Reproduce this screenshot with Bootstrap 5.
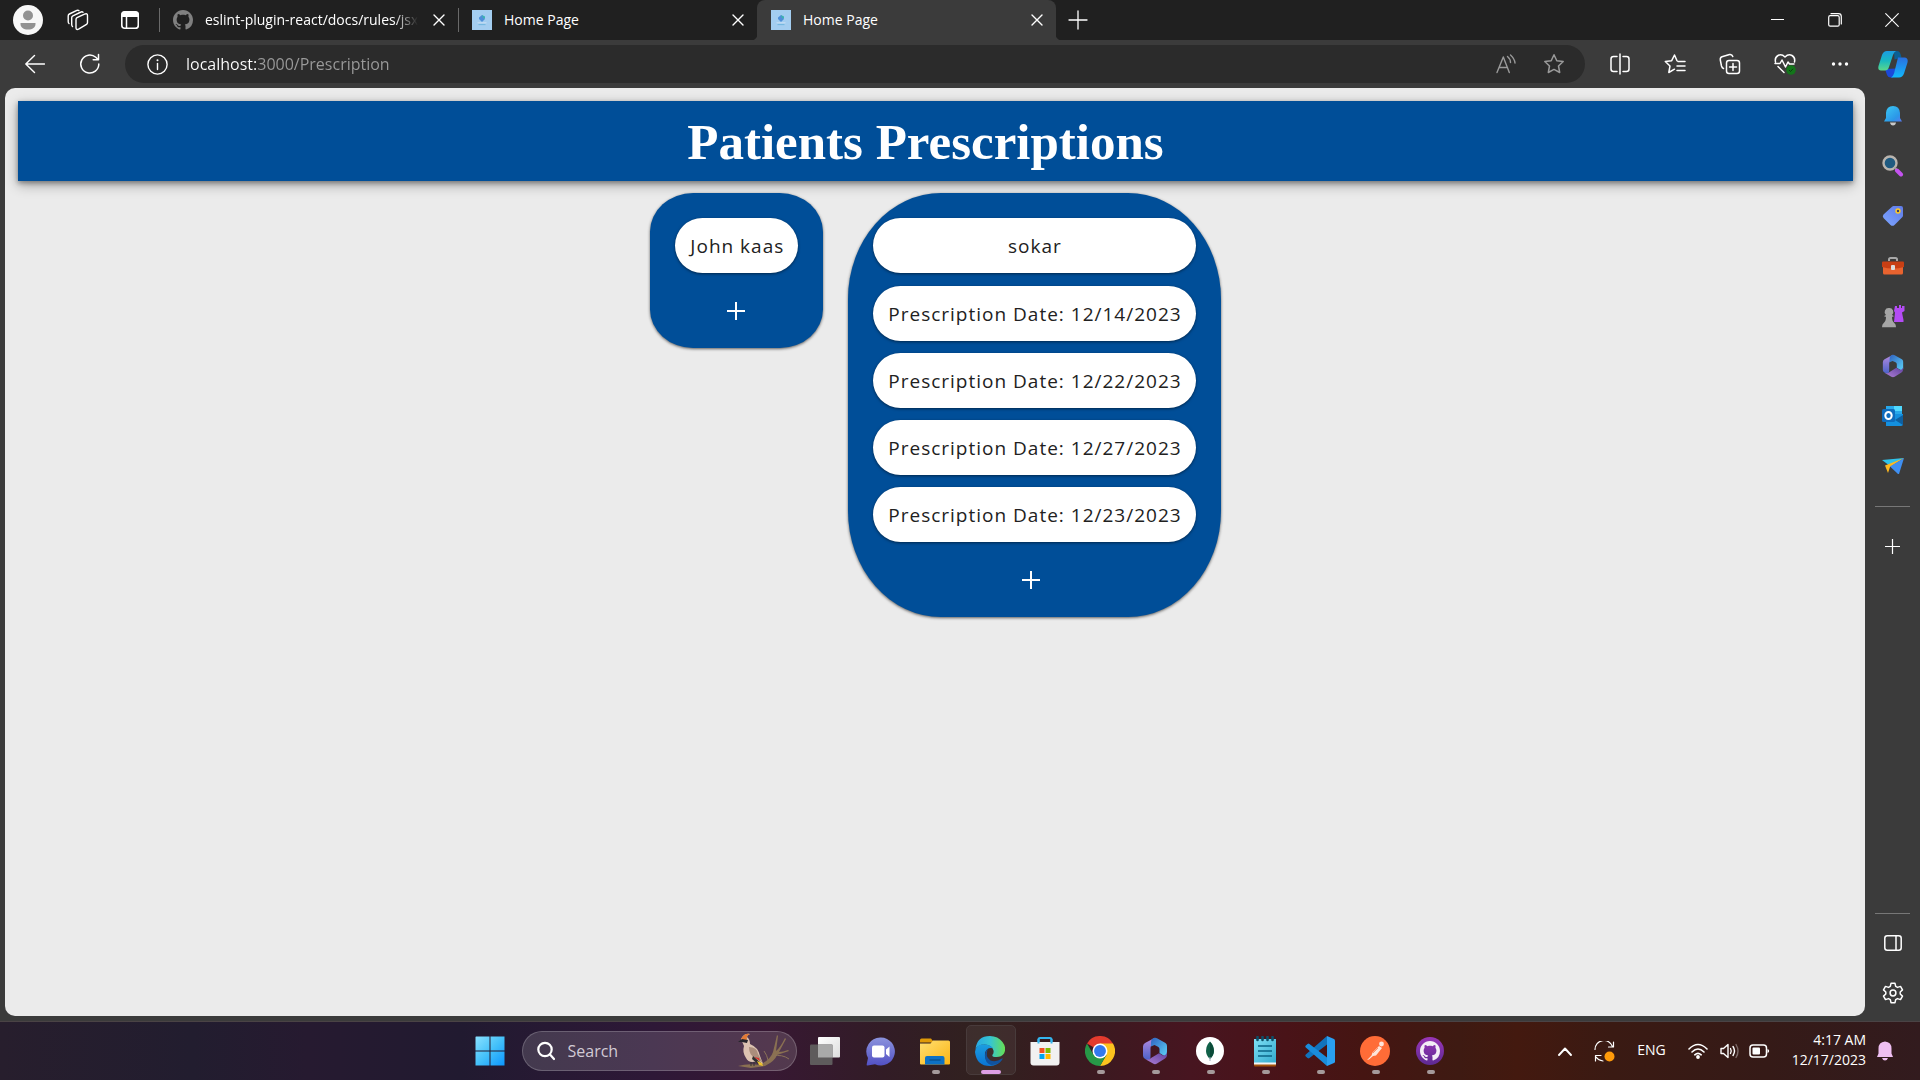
<!DOCTYPE html>
<html lang="en">
<head>
<meta charset="utf-8">
<meta name="viewport" content="width=device-width, initial-scale=1">
<title>Home Page</title>
<link href="https://cdn.jsdelivr.net/npm/bootstrap@5.3.0/dist/css/bootstrap.min.css" rel="stylesheet">
<style>
  :root { --ui: "Open Sans", "Noto Sans", sans-serif; --blue: #004e98; --chrome: #3b3b3b; }
  body { font-family: var(--ui); font-size: 14px; background: var(--chrome); color: #fff; }
  svg { display: block; flex: none; }
  .icon-btn { display: flex; align-items: center; justify-content: center; flex: none; padding: 0; border: 0; background: none; color: inherit; }
  .line { fill: none; stroke: currentColor; stroke-linecap: round; stroke-linejoin: round; }

  /* tab strip */
  .tab-strip { background: #202020; height: 40px; }
  .strip-tools { width: 159px; padding-left: 13px; gap: 24px; }
  .browser-tab { width: 299px; padding: 0 13px 0 14px; position: relative; }
  .browser-tab::before { content: ""; position: absolute; left: 0; top: 8px; width: 1px; height: 24px; background: #6a6a6a; }
  .browser-tab a { color: #fff; text-decoration: none; gap: 12px; min-width: 0; line-height: 20px; padding-bottom: 1px; }
  .tab-text { white-space: nowrap; overflow: hidden; }
  .fade-end { -webkit-mask-image: linear-gradient(90deg, #000 calc(100% - 24px), transparent); mask-image: linear-gradient(90deg, #000 calc(100% - 24px), transparent); }
  .browser-tab.current { background: var(--chrome); border-radius: 8px 8px 0 0; }
  .browser-tab.current::before, .browser-tab.current::after { background: radial-gradient(circle at 0 0, transparent 6px, var(--chrome) 7px); content: ""; position: absolute; top: auto; bottom: 0; width: 6px; height: 6px; }
  .browser-tab.current::before { left: -6px; }
  .browser-tab.current::after { right: -6px; background: radial-gradient(circle at 100% 0, transparent 6px, var(--chrome) 7px); }
  .window-ctl { width: 57px; height: 40px; }

  /* toolbar */
  .toolbar { height: 48px; padding-left: 25px; padding-right: 12px; }
  .address { height: 38px; background: #2b2b2b; border-radius: 19px; margin-left: 24px; padding: 0 20px 0 22px; gap: 18px; }
  .address input { font-size: 16px; border: 0; outline: 0; padding: 0; color: transparent; background: linear-gradient(90deg, #fff 71px, #9a9a9a 71px); -webkit-background-clip: text; background-clip: text; }
  .tool-row { gap: 33px; margin: 0 27px 0 24px; }

  /* page */
  .site { background: #ebebeb; border-radius: 10px; margin: 0 0 5px 5px; padding: 13px 12px 0 13px; color: #212121; overflow: hidden; }
  .site-header { background: var(--blue); height: 80px; padding-right: 20px; box-shadow: 0 4px 12px rgba(0,0,0,.3), 0 2px 5px rgba(0,0,0,.35); }
  .site-header h1 { font: 700 51px/60px "Liberation Serif", "Times New Roman", serif; color: #fff; margin: 0; padding-top: 2px; }
  .patients { gap: 25px; margin-top: 12px; }
  .patient { background: var(--blue); border-radius: 25%; padding: 25px 25px 11px; gap: 12px; box-shadow: 0 1px 3px rgba(0,0,0,.6); }
  .entry { background: #fff; height: 55px; padding: 2px 14px 0 15px; font-size: 19px; line-height: 53px; letter-spacing: 1px; text-align: center; white-space: nowrap; box-shadow: 0 1px 3px rgba(0,0,0,.5); }
  .patient .entry:first-child + .entry { margin-top: 1px; }
  .add { height: 52px; color: #fff; padding-right: 7px; }
  .patient:first-child .add { padding-right: 2px; }

  /* browser side bar */
  .side { width: 55px; padding: 3px 0; }
  .side .icon-btn { width: 55px; height: 50px; }
  .side hr { width: 35px; margin: 0; border-top: 1px solid #777; opacity: 1; }
  .side hr.upper { margin: 15px 0 14px; }

  /* taskbar */
  .taskbar { height: 59px; border-top: 1px solid #4a4345; background: linear-gradient(90deg, #271e2d 0, #221d2f 10%, #261a30 16%, #211a30 24%, #2e1837 34%, #371833 40%, #321c26 46%, #31211f 51%, #391a20 56%, #471520 62%, #491318 67%, #451512 71%, #3e1a12 76%, #43190f 79%, #3a1a13 84%, #351a17 92%, #321b1e 100%); }
  .wing { flex: 1 1 0; }
  .app { width: 55px; height: 58px; position: relative; }
  .app.running::after { content: ""; position: absolute; left: 24px; bottom: 6px; width: 8px; height: 4px; border-radius: 2px; background: #a59a9b; }
  .app.focused::before { content: ""; position: absolute; inset: 3px 2px 5px 3px; border: 1px solid #483b3b; border-radius: 5px; background: rgba(255,255,255,.06); }
  .app.focused::after { left: 18px; width: 20px; background: #dd9fe4; }
  .app svg { position: relative; }
  .search-box { width: 275px; height: 40px; border-radius: 20px; border: 1px solid rgba(255,255,255,.2); background: rgba(255,255,255,.14); margin: 0 1px 0 4px; padding: 0 5px 0 14px; gap: 13px; }
  .search-box input { border: 0; outline: 0; background: none; padding: 0; flex: 1; min-width: 0; font-size: 16px; color: #d8d0da; }
  .search-box input::placeholder { color: #d2cad5; }
  .clock { font-size: 14px; line-height: 20px; text-align: right; margin-left: 22px; padding-bottom: 2px; }
  .tray .wide { margin-right: 22px; }
  .tray .bell { margin: 0 25px 0 9px; }
</style>
<script src="https://cdn.jsdelivr.net/npm/bootstrap@5.3.0/dist/js/bootstrap.bundle.min.js"></script>
</head>
<body class="d-flex flex-column vh-100 overflow-hidden">

<svg width="0" height="0" class="position-absolute" aria-hidden="true">
  <defs>
    <symbol id="cross" viewBox="0 0 12 12"><path class="line" stroke-width="1.4" d="M1 1l10 10M11 1L1 11"/></symbol>
    <symbol id="octo" viewBox="0 0 16 16"><path fill="currentColor" d="M8 0C3.58 0 0 3.58 0 8c0 3.54 2.29 6.53 5.47 7.59.4.07.55-.17.55-.38 0-.19-.01-.82-.01-1.49-2.01.37-2.53-.49-2.69-.94-.09-.23-.48-.94-.82-1.13-.28-.15-.68-.52-.01-.53.63-.01 1.08.58 1.23.82.72 1.21 1.87.87 2.33.66.07-.52.28-.87.51-1.07-1.78-.2-3.64-.89-3.64-3.95 0-.87.31-1.59.82-2.15-.08-.2-.36-1.02.08-2.12 0 0 .67-.21 2.2.82.64-.18 1.32-.27 2-.27s1.36.09 2 .27c1.53-1.04 2.2-.82 2.2-.82.44 1.1.16 1.92.08 2.12.51.56.82 1.27.82 2.15 0 3.07-1.87 3.75-3.65 3.95.29.25.54.73.54 1.48 0 1.07-.01 1.93-.01 2.2 0 .21.15.46.55.38A8.01 8.01 0 0 0 16 8c0-4.42-3.58-8-8-8z"/></symbol>
    <symbol id="favicon" viewBox="0 0 20 20"><rect width="20" height="20" fill="#a3cdf0"/><path d="M7 7.500l3-2.500 3 2.500-.5 2L10 12 7 9z" fill="#4f8fd8"/><path d="M10 5l3 1.500v2l-2-.5z" fill="#3bb3ae"/><path d="M5.500 12.800h9" stroke="#c9dff2" stroke-width="1"/><path d="M6.500 14.600h7" stroke="#6bb2dc" stroke-width=".9"/></symbol>
    <symbol id="plus" viewBox="0 0 18 18"><path d="M9 0v18M0 9h18" stroke="currentColor" stroke-width="2"/></symbol>
    <linearGradient id="ma" x1="0" y1="0" x2="0" y2="1"><stop offset="0" stop-color="#b58be0"/><stop offset="1" stop-color="#4a62c8"/></linearGradient>
    <linearGradient id="mb" x1="0" y1="0" x2="1" y2="1"><stop offset="0" stop-color="#2f62c0"/><stop offset="1" stop-color="#5cd2f8"/></linearGradient>
    <linearGradient id="mc" x1="0" y1="1" x2="1" y2="0"><stop offset="0" stop-color="#b07fd6"/><stop offset="1" stop-color="#5b3f9c"/></linearGradient>
    <symbol id="m365" viewBox="0 0 26 28">
      <path d="M13 .7L3 6Q1 7.200 1 9.500v9q0 2 1.500 3l3 1.500q3 .5 3-3V11q0-2 1.500-3L17 4z" fill="url(#ma)"/>
      <path d="M11 1.300q2-1 4 0L23.500 6Q25 7 25 9v8.500q-1 2.500-3.500 1L17.500 16V12q0-1.500-1.500-2.300L12.500 8 9 9.500V5q0-2.500 2-3.700z" fill="url(#mb)"/>
      <path d="M25 14.500V18q0 2.500-2 3.600L15 26.600q-2 1.100-4 0L3 22q4 1.500 6-1l8-4.800 4 2.300q3.500 0 4-4z" fill="url(#mc)"/>
    </symbol>
  </defs>
</svg>

<header>
  <nav class="tab-strip d-flex" aria-label="Tabs">
    <div class="strip-tools d-flex align-items-center">
      <button class="icon-btn" aria-label="Profile"><svg width="30" height="30" viewBox="0 0 30 30"><circle cx="15" cy="15" r="15" fill="#f8f8f8"/><circle cx="15" cy="10.500" r="5" fill="#929292"/><path d="M7.500 18h15v1c0 3.500-3 5.500-7.500 5.500S7.500 22.500 7.500 19z" fill="#929292"/></svg></button>
      <button class="icon-btn" aria-label="Workspaces"><svg width="22" height="22" viewBox="0 0 22 22" class="line" stroke-width="1.400"><path d="M9 10.500q0-1.200 1-1.800l7.500-3.600q3-1.200 3 1.400v7q0 1.200-1 1.800l-7.500 4.600q-3 1.600-3-1.200zM5.500 17.500q-.8-.6-.8-2V8.800q0-1.400 1.200-2L14 3q1.200-.6 2 .2M2 14.500q-.8-.6-.8-2V7q0-1.400 1.200-2l7.500-3.600q1.200-.5 2 .2"/></svg></button>
      <button class="icon-btn ms-2" aria-label="Tab actions"><svg width="18" height="20" viewBox="1 0 18 20"><rect x="1.800" y="1.800" width="16.500" height="16.500" rx="3" class="line" stroke-width="1.600"/><path d="M1.500 7V4q0-2.500 2.500-2.500h12Q18.500 1.500 18.500 4v3z" fill="#fff"/><path d="M6.500 6v12" stroke="#fff" stroke-width="1.500"/></svg></button>
    </div>
    <div class="browser-tab d-flex align-items-center justify-content-between">
      <a href="#" class="d-flex align-items-center"><svg width="20" height="20" style="color:#808080"><use href="#octo"/></svg><span class="tab-text fade-end">eslint-plugin-react/docs/rules/jsx</span></a>
      <button class="icon-btn ms-1" aria-label="Close tab"><svg width="12" height="12"><use href="#cross"/></svg></button>
    </div>
    <div class="browser-tab d-flex align-items-center justify-content-between">
      <a href="#" class="d-flex align-items-center"><svg width="20" height="20"><use href="#favicon"/></svg><span class="tab-text">Home Page</span></a>
      <button class="icon-btn" aria-label="Close tab"><svg width="12" height="12"><use href="#cross"/></svg></button>
    </div>
    <div class="browser-tab current d-flex align-items-center justify-content-between">
      <a href="#" class="d-flex align-items-center"><svg width="20" height="20"><use href="#favicon"/></svg><span class="tab-text">Home Page</span></a>
      <button class="icon-btn" aria-label="Close tab"><svg width="12" height="12"><use href="#cross"/></svg></button>
    </div>
    <button class="icon-btn ms-2 px-1" aria-label="New tab"><svg width="20" height="20" viewBox="0 0 20 20" class="line" stroke-width="1.300"><path d="M10 1v18M1 10h18"/></svg></button>
    <div class="d-flex ms-auto">
      <button class="icon-btn window-ctl" aria-label="Minimize"><svg width="14" height="14" viewBox="0 0 14 14"><path d="M0 6.500h13" stroke="#fff"/></svg></button>
      <button class="icon-btn window-ctl" aria-label="Restore"><svg width="14" height="14" viewBox="0 0 14 14" class="line" stroke-width="1.200"><rect x=".7" y="2.700" width="10.500" height="10.500" rx="1.500"/><path d="M3 .7h7.500q2.800 0 2.800 2.800V11"/></svg></button>
      <button class="icon-btn window-ctl" aria-label="Close"><svg width="14" height="14" viewBox="0 0 14 14" class="line" stroke-width="1.100"><path d="M.7.700l12.600 12.600M13.300.7L.7 13.300"/></svg></button>
    </div>
  </nav>

  <div class="toolbar d-flex align-items-center">
    <button class="icon-btn" aria-label="Back"><svg width="20" height="20" viewBox="0 0 20 20" class="line" stroke-width="1.400"><path d="M19.500 10H.8M9.500 1.500L.8 10l8.700 8.500"/></svg></button>
    <button class="icon-btn ms-4 ps-2" aria-label="Refresh"><svg width="24" height="22" viewBox="-1 0 22 22" class="line" stroke-width="1.500"><path d="M19.800 11a9 9 0 1 1-3-6.700l2.500 2.400M19.500 1.500v5.300h-5.300"/></svg></button>
    <div class="address d-flex align-items-center flex-grow-1">
      <svg width="21" height="21" viewBox="0 0 21 21"><circle cx="10.500" cy="10.500" r="9.600" class="line" stroke-width="1.400"/><path d="M10.500 9.500v6" class="line" stroke-width="1.400"/><circle cx="10.500" cy="6.300" r="1" fill="#fff"/></svg>
      <input type="text" class="flex-grow-1" aria-label="Address" value="localhost:3000/Prescription">
      <button class="icon-btn me-2" aria-label="Read aloud" style="color:#9a9a9a"><svg width="21" height="20" viewBox="0 0 21 20" class="line" stroke-width="1.400"><path d="M1 18.500L7.300 3l6 15.500M3 13.500h8.500M11.500 2.500q3 2.500 3 6M14.500 1q4 3.500 4.500 8"/></svg></button>
      <button class="icon-btn" aria-label="Add to favorites" style="color:#9a9a9a"><svg width="22" height="22" viewBox="0 0 22 22" class="line" stroke-width="1.500"><path d="M11 1.800l2.800 5.900 6.400.8-4.700 4.500 1.200 6.500L11 16.400l-5.700 3.100L6.500 13 1.800 8.500l6.400-.8z"/></svg></button>
    </div>
    <div class="tool-row d-flex align-items-center">
      <button class="icon-btn" aria-label="Split screen"><svg width="22" height="22" viewBox="0 0 22 22" class="line" stroke-width="1.500"><path d="M11 1v20M8 3.500H4.500Q2 3.500 2 6v10q0 2.500 2.500 2.500H8M14 3.500h3.500Q20 3.500 20 6v10q0 2.500-2.500 2.500H14"/></svg></button>
      <button class="icon-btn" aria-label="Favorites"><svg width="22" height="22" viewBox="0 0 22 22" class="line" stroke-width="1.500"><path d="M13 7.700L10.500 2 7.700 7.700l-6.400.8L6 13l-1.200 6.500 5.700-3.300M14 8.500h7M13 13h8M13 17.500h8"/></svg></button>
      <button class="icon-btn" aria-label="Collections"><svg width="22" height="22" viewBox="0 0 22 22" class="line" stroke-width="1.500"><rect x="7.500" y="7.500" width="13" height="13" rx="2.500"/><path d="M14 10.500v7M10.500 14h7M4.500 15.500Q3 15 2.500 13L1.300 7Q1 4.500 3 3.800L10.500 1.500q2.500-.5 3.300 2"/></svg></button>
      <button class="icon-btn" aria-label="Browser essentials"><svg width="22" height="22" viewBox="0 0 22 22"><path class="line" stroke-width="1.500" d="M1.500 9Q.5 4.500 4 2.500t7 1.500q3.500-3.500 7-1.500T20.500 9M1 10.500h5l2-3.500 3.500 7L14 9l1.500 2H20M4 13.500l6 6"/><circle cx="17" cy="17" r="4.800" fill="#13751a"/><path d="M15 17l1.500 1.500L19 15.800" stroke="#0b3b0f" fill="none"/></svg></button>
      <button class="icon-btn" aria-label="Settings and more"><svg width="22" height="6" viewBox="0 0 22 6" fill="#fff"><circle cx="4.500" cy="3" r="1.700"/><circle cx="11" cy="3" r="1.700"/><circle cx="17.500" cy="3" r="1.700"/></svg></button>
    </div>
    <button class="icon-btn" aria-label="Copilot"><svg width="30" height="28" viewBox="0 0 30 28"><defs><linearGradient id="ca" x1="0" y1="0" x2="0" y2="1"><stop offset="0" stop-color="#1c9be2"/><stop offset=".5" stop-color="#19b8c0"/><stop offset="1" stop-color="#5bd88a"/></linearGradient><linearGradient id="cb" x1="0" y1="0" x2="0" y2="1"><stop offset="0" stop-color="#2a6fe0"/><stop offset="1" stop-color="#12b8fb"/></linearGradient></defs><path d="M16 1h3q2.500 0 3.500 3l1 3.500-7 2z" fill="#0a5f94"/><path d="M7 19l2 6q1 2.500 4 2.500h2l3-9z" fill="#1b49d8"/><path d="M9 1h9q-2 1-3 4l-4 12q-1 3.500-4 3.500H3Q-.5 20.500.5 16L4 5q1.500-4 5-4z" fill="url(#ca)"/><path d="M20 7.500h6.500q4 .5 3 5L26 23.500q-1.500 4-5 4h-8q2-1 3-4z" fill="url(#cb)"/></svg></button>
  </div>
</header>

<div class="d-flex flex-grow-1 overflow-hidden">
  <main class="site flex-grow-1">
    <div class="site-header d-flex align-items-center justify-content-center"><h1>Patients Prescriptions</h1></div>
    <div class="patients d-flex justify-content-center align-items-start">
      <section class="patient d-flex flex-column">
        <div class="entry rounded-pill">John kaas</div>
        <button class="icon-btn add" aria-label="Add prescription for John kaas"><svg width="18" height="18"><use href="#plus"/></svg></button>
      </section>
      <section class="patient d-flex flex-column">
        <div class="entry rounded-pill">sokar</div>
        <div class="entry rounded-pill">Prescription Date: 12/14/2023</div>
        <div class="entry rounded-pill">Prescription Date: 12/22/2023</div>
        <div class="entry rounded-pill">Prescription Date: 12/27/2023</div>
        <div class="entry rounded-pill">Prescription Date: 12/23/2023</div>
        <button class="icon-btn add" aria-label="Add prescription for sokar"><svg width="18" height="18"><use href="#plus"/></svg></button>
      </section>
    </div>
  </main>

  <aside class="side d-flex flex-column align-items-center flex-shrink-0">
    <button class="icon-btn" aria-label="Notifications"><svg width="18" height="22" viewBox="0 0 18 22"><defs><linearGradient id="be" x1="0" y1="0" x2="1" y2="1"><stop offset="0" stop-color="#3ccbf4"/><stop offset=".7" stop-color="#2b97e8"/><stop offset="1" stop-color="#5a78f0"/></linearGradient></defs><path d="M6 17.500h6q-.5 3-3 3t-3-3z" fill="#c9c9c9"/><path d="M9 1q6.500 0 7 7v5l2 3.500H0L2 13V8q.5-7 7-7z" fill="url(#be)"/></svg></button>
    <button class="icon-btn" aria-label="Search"><svg width="22" height="22" viewBox="0 0 22 22"><circle cx="8" cy="8" r="6.500" fill="#1f5a80" stroke="#b9b4ae" stroke-width="2.400"/><path d="M12.500 12.500l2.500 2.500" stroke="#999" stroke-width="2"/><path d="M15 15.500l4 4" stroke="#c452f0" stroke-width="4" stroke-linecap="round"/></svg></button>
    <button class="icon-btn" aria-label="Shopping"><svg width="22" height="22" viewBox="0 0 22 22"><defs><linearGradient id="tg" x1="1" y1="0" x2="0" y2="1"><stop offset="0" stop-color="#5f7be8"/><stop offset="1" stop-color="#7ea6ff"/></linearGradient></defs><path d="M11.500 1h7.500q2 0 2 2v7.500q0 1-.8 1.800l-7.700 7.700q-2 1.700-4 0L1.500 13q-1.500-2 0-3.500L10 1.700Q10.700 1 11.500 1z" fill="url(#tg)"/><circle cx="16" cy="6" r="2.700" fill="#ffc928"/><circle cx="16" cy="6" r="1.200" fill="#37406c"/></svg></button>
    <button class="icon-btn" aria-label="Tools"><svg width="24" height="20" viewBox="0 0 24 20"><path d="M8 5V3.500Q8 2 9.500 2h5Q16 2 16 3.500V5" fill="none" stroke="#a8a8a8" stroke-width="2"/><rect x="2" y="9" width="20" height="9.500" rx="1.500" fill="#e8632f"/><path d="M2 5.500h20q1 0 1 1V11q-11 3-22 0V6.500q0-1 1-1z" fill="#c83f14"/><rect x="10" y="9" width="4" height="5" rx="1" fill="#ddd"/></svg></button>
    <button class="icon-btn" aria-label="Games"><svg width="24" height="24" viewBox="0 0 24 24"><path d="M14 2h2v2h2V1h2v3h1V2h2.500v5L21 8.500l1.500 7.500v2H13l1-9.500-1-1.500z" fill="#b44cf5"/><path d="M8 4a4 4 0 0 1 3 7l1.500.8v1H11q0 4.500 2.500 6.500 1.500 1 1.500 4H1q0-3 1.500-4Q5 17.300 5 12.800H3.500v-1L5 11a4 4 0 0 1 3-7z" fill="#a5a5a5"/></svg></button>
    <button class="icon-btn" aria-label="Microsoft 365"><svg width="22" height="24"><use href="#m365"/></svg></button>
    <button class="icon-btn" aria-label="Outlook"><svg width="22" height="22" viewBox="0 0 22 22"><path d="M4 1h16v10H4z" fill="#28a8ea"/><path d="M12 1h8v5h-8z" fill="#50d9ff"/><path d="M4 9h17v10q0 2-2 2H4z" fill="#1490df"/><path d="M21 10v10l-8-5z" fill="#0f5f9f"/><rect y="4" width="13" height="13" rx="1.500" fill="#0f6cbd"/><ellipse cx="6.500" cy="10.500" rx="3.200" ry="3.500" fill="none" stroke="#fff" stroke-width="2"/></svg></button>
    <button class="icon-btn" aria-label="Drop"><svg width="24" height="20" viewBox="0 0 24 20"><path d="M1 4L23 2 9 10z" fill="#2fc2ea"/><path d="M23 2L4 9.500 7 17l2-6z" fill="#ffb91f"/><path d="M23 2L9 10.500 17 18q.8.300 1.200-.5z" fill="#3f8ff2"/></svg></button>
    <hr class="upper">
    <button class="icon-btn" aria-label="Customize"><svg width="15" height="15" viewBox="0 0 15 15" class="line" stroke-width="1.200"><path d="M7.500 0v15M0 7.500h15"/></svg></button>
    <hr class="mt-auto mb-1">
    <button class="icon-btn" aria-label="Hide side bar"><svg width="18" height="16" viewBox="0 0 18 16" class="line" stroke-width="1.500"><rect x=".8" y=".8" width="16.400" height="14.400" rx="2.500"/><path d="M12 1v14"/></svg></button>
    <button class="icon-btn" aria-label="Settings"><svg width="22" height="22" viewBox="0 0 22 22" class="line" stroke-width="1.500"><path d="M9 1.300h4l.7 3.100 1.800 1 3-1 2 3.500-2.300 2.100v2l2.300 2.100-2 3.500-3-1-1.800 1-.7 3.100H9l-.7-3.100-1.800-1-3 1-2-3.500L3.800 12v-2L1.500 7.900l2-3.500 3 1 1.800-1z"/><circle cx="11" cy="11" r="2.900"/></svg></button>
  </aside>
</div>

<footer class="taskbar d-flex align-items-center flex-shrink-0">
  <div class="wing"></div>
  <div class="d-flex align-items-center">
    <button class="icon-btn app" aria-label="Start"><svg width="30" height="30" viewBox="0 0 30 30"><defs><linearGradient id="wi" gradientUnits="userSpaceOnUse" x1="0" y1="0" x2="30" y2="30"><stop offset="0" stop-color="#8ce2ff"/><stop offset=".5" stop-color="#45c1fa"/><stop offset="1" stop-color="#0a95ff"/></linearGradient></defs><path d="M1 .5h13.500V14.500H.5V1zM15.500.5H29.500v14h-14zM.5 15.500h14v14H.5zM15.500 15.500h14v14h-14z" fill="url(#wi)"/></svg></button>
    <div class="search-box d-flex align-items-center">
      <svg width="18" height="20" viewBox="0 0 18 20" class="line" stroke-width="2.200"><circle cx="8" cy="8.500" r="6.700"/><path d="M13 13.500l4 4.500"/></svg>
      <input type="search" placeholder="Search" aria-label="Search">
      <svg width="54" height="36" viewBox="0 0 54 36"><path d="M1 33q10-3 22-1 11-6 13-13 2-8 4-17l1 1-2 15q4-3 9-13l1 1-7 13q4 0 9-2l1 1-12 4q-2 6-12 11l-14 2z" fill="#8a7052"/><path d="M36 23q9-2 16 3M31 27q-1-5-4-9" stroke="#8b7258" fill="none"/><path d="M4 6Q7 0 13 1q-3 1-3 3 3 2 3 7 8 3 10 12l3 8-6-3q-8 3-11-3-4-6-2-12z" fill="#dcc3b1"/><path d="M4 6Q7 0 13 1q-4 2-3 5l-1 3z" fill="#e27a35"/><path d="M1 9l4-3 6 1-1 3-5-1z" fill="#26262c"/><path d="M12 14q8 0 9 7l5 9-8-5q-6-3-6-11z" fill="#ab8e7c"/><path d="M16 23l8 7-3 1-6-5z" fill="#30302f"/><path d="M17 24l5 1 1 3z" fill="#d9302b"/><path d="M20 28l5 2 1 3-4-1z" fill="#edc231"/><path d="M14 29v4M17 29v4" stroke="#333"/></svg>
    </div>
    <button class="icon-btn app" aria-label="Task view"><svg width="30" height="28" viewBox="0 0 30 28"><defs><linearGradient id="tv" x1="0" y1="0" x2="1" y2="1"><stop offset="0" stop-color="#fff"/><stop offset="1" stop-color="#ddd"/></linearGradient></defs><rect x="8" width="22" height="20.500" rx="1" fill="url(#tv)"/><rect x="0" y="7.500" width="22.500" height="20.500" rx="1" fill="#5e5b5c"/><path d="M8 7.500h14.500v13H8z" fill="#a9a9a9"/></svg></button>
    <button class="icon-btn app" aria-label="Chat"><svg width="29" height="29" viewBox="0 0 29 29"><defs><linearGradient id="ch" x1="0" y1="0" x2="0" y2="1"><stop offset="0" stop-color="#8b93dd"/><stop offset="1" stop-color="#5250c4"/></linearGradient></defs><path d="M15 .5a14 14 0 1 1-6 26.700l-7.500 1.300q-1 0-.8-1.200L2 21A14 14 0 0 1 15 .5z" fill="url(#ch)"/><rect x="6" y="8.500" width="12.500" height="12" rx="2" fill="#fff"/><path d="M20 12.500l3.500-3v10.500L20 17z" fill="#fff"/></svg></button>
    <button class="icon-btn app running" aria-label="File Explorer"><svg width="30" height="27" viewBox="0 0 30 27"><defs><linearGradient id="fo" x1="0" y1="0" x2="1" y2="1"><stop offset="0" stop-color="#ffdf72"/><stop offset="1" stop-color="#fbb514"/></linearGradient></defs><path d="M0 2Q0 .5 1.500.500h9.500l3 4H0z" fill="#e09a08"/><path d="M0 5.500h10.500l2.500-3H28.500Q30 2.500 30 4v21.500q0 1-1 1H1q-1 0-1-1z" fill="url(#fo)"/><path d="M5 26.500v-6.500q0-2 2-2h15.500q2 0 2 2v6.500z" fill="#0d71c4"/><path d="M9.500 22h11" stroke="#084f8d" stroke-width="1.300"/></svg></button>
    <button class="icon-btn app running focused" aria-label="Microsoft Edge"><svg width="30" height="30" viewBox="0 0 30 30"><defs><linearGradient id="ea" x1="0" y1="0" x2="1" y2="0"><stop offset="0" stop-color="#27a8e4"/><stop offset=".5" stop-color="#36c5d2"/><stop offset="1" stop-color="#67e052"/></linearGradient><linearGradient id="eb" x1="0" y1="0" x2="0" y2="1"><stop offset="0" stop-color="#1c9ee0"/><stop offset="1" stop-color="#0a74d4"/></linearGradient></defs><path d="M.5 13Q2 0 15 0q8 0 12.500 6T29 17.500Q26.500 21 21.500 21q-5 0-4-2.300 1.500-1.500 1-4.200Q17 9 9.500 8.500 3 8.500.5 13z" fill="url(#ea)"/><path d="M27.500 22.500Q23 30 15 30 1.500 30 0 16 .5 9 8 8.200q7 0 10 4-6-1.500-8 4.500-1 7 4.500 10 6 2.300 13-4.200z" fill="url(#eb)"/><path d="M13 12.500q-3.500 8 2.500 12 5.500 2 11.500-2l.8.3Q24 29.500 16 29q-6-1.500-6-9.500.3-5 3-7z" fill="#11539f"/></svg></button>
    <button class="icon-btn app" aria-label="Microsoft Store"><svg width="30" height="30" viewBox="0 0 30 30"><path d="M8.500 8V3.500Q8.500 2 10 2h10q1.500 0 1.500 1.500V8" fill="none" stroke="#34b5ee" stroke-width="2"/><path d="M.5 6h29v20.500q0 3-3 3h-23q-3 0-3-3z" fill="#f1f1f1"/><path d="M8.500 3v4.500M21.500 3v4.500" stroke="#34b5ee" stroke-width="2"/><path d="M9.500 12h5v5h-5z" fill="#f25022"/><path d="M15.500 12h5v5h-5z" fill="#7fba00"/><path d="M9.500 18h5v5h-5z" fill="#00a4ef"/><path d="M15.500 18h5v5h-5z" fill="#ffb900"/></svg></button>
    <button class="icon-btn app running" aria-label="Google Chrome"><svg width="30" height="30" viewBox="0 0 48 48"><path d="M24 24L3.200 12A24 24 0 0 1 44.800 12z" fill="#e33b2e"/><path d="M24 24V12h20.800A24 24 0 0 1 24 48l10.400-18z" fill="#fcc31e"/><path d="M3.200 12A24 24 0 0 0 24 48l10.400-18-10.400 6L13.600 30z" fill="#279847"/><circle cx="24" cy="24" r="12" fill="#fff"/><circle cx="24" cy="24" r="9.500" fill="#3379ee"/></svg></button>
    <button class="icon-btn app running" aria-label="Microsoft 365"><svg width="26" height="28"><use href="#m365"/></svg></button>
    <button class="icon-btn app running" aria-label="MongoDB Compass"><svg width="28" height="28" viewBox="0 0 28 28"><circle cx="14" cy="14" r="14" fill="#fff"/><path d="M14 4.500q4 4 4 9.500 0 4.500-4 8-4-3.500-4-8 0-5.500 4-9.500z" fill="#116149"/><path d="M14 5q3.800 4 3.800 9 0 4.200-3.800 7.500z" fill="#0b4a38"/><path d="M14 20v4" stroke="#9ab" /></svg></button>
    <button class="icon-btn app running" aria-label="Notepad"><svg width="24" height="31" viewBox="0 0 24 31"><defs><linearGradient id="np" x1="0" y1="0" x2="1" y2="1"><stop offset="0" stop-color="#7fe0f5"/><stop offset="1" stop-color="#33aace"/></linearGradient></defs><rect x="1" y="27" width="22" height="3.500" rx="1" fill="#a4520b"/><rect x="1" y="25" width="22" height="3.500" fill="#f4f4f4"/><path d="M1 3h22v23.500H1z" fill="url(#np)"/><path d="M4.500 1v3M9.500 1v3M14.500 1v3M19.500 1v3" stroke="#0c4f68" stroke-width="2.600" stroke-linecap="round"/><path d="M5 10h14M5 15h14M5 20h14" stroke="#0b6486" stroke-width="1.700"/></svg></button>
    <button class="icon-btn app running" aria-label="Visual Studio Code"><svg width="30" height="30" viewBox="0 0 30 30"><path d="M22 0l7 3q1 .5 1 1.500v21q0 1-1 1.500l-7 3z" fill="#2a9ff0"/><path d="M22 0v8.500L4.500 22q-1 .8-2 0L.8 20.500q-1-.9 0-1.900z" fill="#1173bd"/><path d="M22 30v-8.500L4.500 8q-1-.8-2 0L.8 9.500q-1 .9 0 1.900z" fill="#1a8cdb"/></svg></button>
    <button class="icon-btn app running" aria-label="Postman"><svg width="30" height="30" viewBox="0 0 30 30"><circle cx="15" cy="15" r="15" fill="#ff6c37"/><circle cx="21.500" cy="8" r="2.400" fill="#fde4da"/><path d="M19 10l3 2-6 7.500-3 .5-4 3.500-2 .5 4.500-4.500 1-3z" fill="#fde4da"/><path d="M13 17l5-5" stroke="#ff6c37" stroke-width=".7"/></svg></button>
    <button class="icon-btn app running" aria-label="GitHub Desktop"><svg width="28" height="28" viewBox="0 0 28 28"><defs><linearGradient id="gh" x1="0" y1="0" x2="0" y2="1"><stop offset="0" stop-color="#9a36b8"/><stop offset="1" stop-color="#5d2a92"/></linearGradient></defs><circle cx="14" cy="14" r="14" fill="url(#gh)"/><svg x="4" y="4" width="20" height="20" style="color:#f3edf6"><use href="#octo"/></svg></svg></button>
  </div>
  <div class="wing tray d-flex align-items-center justify-content-end">
    <button class="icon-btn wide" aria-label="Show hidden icons"><svg width="14" height="9" viewBox="0 0 14 9" class="line" stroke-width="1.900"><path d="M1 8l6-6.500L13 8"/></svg></button>
    <button class="icon-btn wide" aria-label="Updates"><svg width="21" height="21" viewBox="0 0 21 21"><path class="line" stroke-width="1.200" d="M1 8.500A9 9 0 0 1 18.500 5.500M19.500 1v5h-5M9 20Q4.500 19.500 2 16M1.500 20v-5.500H7"/><circle cx="15.500" cy="15.500" r="5" fill="#ff9a0a"/></svg></button>
    <span class="wide pb-1">ENG</span>
    <button class="icon-btn" aria-label="Network"><svg width="20" height="16" viewBox="0 0 20 16" class="line" stroke-width="1.600"><path d="M1 6q9-9 18 0M4 9q6-6 12 0M6.800 11.800q3.200-3 6.400 0"/><circle cx="10" cy="14" r="1.100" fill="#fff"/></svg></button>
    <button class="icon-btn ms-2 ps-1" aria-label="Volume"><svg width="21" height="18" viewBox="0 0 21 18" class="line" stroke-width="1.400"><path d="M1 6.500h2.500L8 2.500v13l-4.500-4H1zM10.500 6.500q1.500 2.500 0 5M13 4.500q3 4.500 0 9"/><path d="M16 2.500q4 6.500 0 13" opacity=".35"/></svg></button>
    <button class="icon-btn ms-2" aria-label="Battery"><svg width="21" height="14" viewBox="0 0 21 14"><rect x="1" y="1" width="16.500" height="12" rx="3" class="line" stroke-width="1.500"/><rect x="3.500" y="3.500" width="7.500" height="7" rx="1" fill="#fff"/><path d="M18.500 5q1.700.5 1.700 2t-1.700 2z" fill="#fff"/></svg></button>
    <div class="clock">4:17 AM<br>12/17/2023</div>
    <button class="icon-btn bell" aria-label="Notification center"><svg width="20" height="20" viewBox="0 0 20 20" fill="#efbff2"><path d="M10 .5q6.500.5 6.500 7v5l1.500 3.500H2L3.500 12.500v-5q0-6.500 6.500-7zM7 17h6q-1 2.500-3 2.500T7 17z"/></svg></button>
  </div>
</footer>
</body>
</html>
